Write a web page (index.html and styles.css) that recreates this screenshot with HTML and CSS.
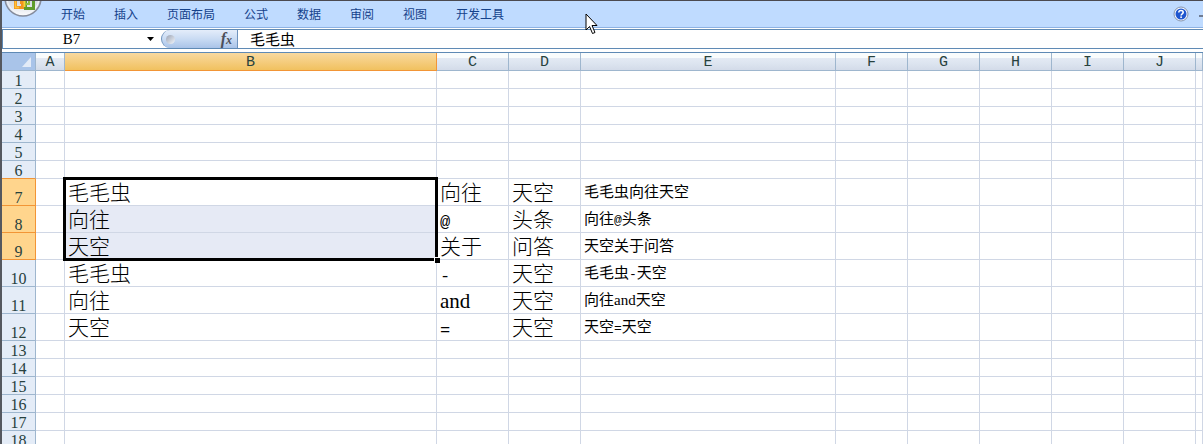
FILE: index.html
```html
<!DOCTYPE html>
<html lang="zh-CN">

<head>
    <meta charset="UTF-8">
    <meta name="viewport" content="width=device-width, initial-scale=1.0">
    <title>工作表</title>
    <link rel="stylesheet" href="styles.css">
</head>

<body>

    <header class="ribbon">
        <button class="office" aria-label="Office 按钮">
            <svg width="38" height="38" viewBox="0 0 38 38">
                <defs>
                    <linearGradient id="ball" x1="0" y1="0" x2="0" y2="1">
                        <stop offset="0.4" stop-color="#c9cfda" />
                        <stop offset="0.75" stop-color="#dfe4ec" />
                        <stop offset="1" stop-color="#ffffff" />
                    </linearGradient>
                </defs>
                <circle cx="19" cy="19" r="18" fill="url(#ball)" stroke="#858c9c" stroke-width="1.5" />
                <circle cx="19" cy="19" r="16" fill="none" stroke="#f4f6fa" />
                <path d="M16 20H11.500V28.500H18.500V23.500H16" fill="none" stroke="#f0941e" stroke-width="3" />
                <path d="M11.500 20V28.500H15" fill="none" stroke="#ffc23a" stroke-width="1.500" />
                <path d="M21.500 20V29.500H29.500V20" fill="none" stroke="#5f9c2c" stroke-width="3" />
                <path d="M25 20V25H22" fill="none" stroke="#8fbf3f" stroke-width="2" />
                <path d="M20.500 20V28" stroke="#f4d23a" stroke-width="2" />
            </svg>
        </button>
        <nav class="tabs">
            <a href="#">开始</a>
            <a href="#">插入</a>
            <a href="#">页面布局</a>
            <a href="#">公式</a>
            <a href="#">数据</a>
            <a href="#">审阅</a>
            <a href="#">视图</a>
            <a href="#">开发工具</a>
        </nav>
        <button class="help" aria-label="帮助">
            <svg width="16" height="16" viewBox="0 0 16 16">
                <circle cx="8" cy="8" r="7" fill="#f4f8ff" stroke="#8795ad" />
                <circle cx="8" cy="8" r="5.5" fill="#1f56cf" />
                <path d="M5.8 6.4C5.8 3.8 10.3 3.9 10.2 6.4C10.1 7.8 8.1 7.8 8.1 9.5" fill="none" stroke="#fff" stroke-width="1.6" />
                <rect x="7.3" y="10.4" width="1.6" height="1.6" fill="#fff" />
            </svg>
        </button>
        <button class="minimize" aria-label="最小化"></button>
    </header>

    <div class="formula-bar">
        <input class="name-box" type="text" value="B7" aria-label="名称框">
        <button class="name-arrow" aria-label="名称列表">
            <svg width="7" height="4" viewBox="0 0 7 4"><path d="M0 0H7L3.5 4Z" /></svg>
        </button>
        <button class="fx" aria-label="插入函数">
            <span class="knob"></span>
            <em>f<small>x</small></em>
        </button>
        <input class="formula" type="text" value="毛毛虫" aria-label="编辑栏">
    </div>

    <main class="sheet">
        <table>
            <colgroup>
                <col class="w-num">
                <col class="w-a">
                <col class="w-b">
                <col class="w-std">
                <col class="w-std">
                <col class="w-e">
                <col class="w-std">
                <col class="w-std">
                <col class="w-std">
                <col class="w-std">
                <col class="w-std">
                <col>
            </colgroup>
            <thead>
                <tr>
                    <th class="corner"><svg width="9" height="10" viewBox="0 0 9 10"><path d="M9 0V10H0Z" fill="#e3ebf7" /></svg></th>
                    <th>A</th>
                    <th class="active">B</th>
                    <th>C</th>
                    <th>D</th>
                    <th>E</th>
                    <th>F</th>
                    <th>G</th>
                    <th>H</th>
                    <th>I</th>
                    <th>J</th>
                    <th></th>
                </tr>
            </thead>
            <tbody>
                <tr><th>1</th><td></td><td></td><td></td><td></td><td></td><td></td><td></td><td></td><td></td><td></td><td></td></tr>
                <tr><th>2</th><td></td><td></td><td></td><td></td><td></td><td></td><td></td><td></td><td></td><td></td><td></td></tr>
                <tr><th>3</th><td></td><td></td><td></td><td></td><td></td><td></td><td></td><td></td><td></td><td></td><td></td></tr>
                <tr><th>4</th><td></td><td></td><td></td><td></td><td></td><td></td><td></td><td></td><td></td><td></td><td></td></tr>
                <tr><th>5</th><td></td><td></td><td></td><td></td><td></td><td></td><td></td><td></td><td></td><td></td><td></td></tr>
                <tr class="before"><th>6</th><td></td><td></td><td></td><td></td><td></td><td></td><td></td><td></td><td></td><td></td><td></td></tr>
                <tr class="tall picked">
                    <th>7</th><td></td>
                    <td class="anchor">毛毛虫<div class="selection"><i class="handle"></i></div></td>
                    <td>向往</td><td>天空</td><td class="joined">毛毛虫向往天空</td>
                    <td></td><td></td><td></td><td></td><td></td><td></td>
                </tr>
                <tr class="tall picked">
                    <th>8</th><td></td><td class="shade">向往</td>
                    <td><span class="half">@</span></td><td>头条</td><td class="joined">向往<span class="half">@</span>头条</td>
                    <td></td><td></td><td></td><td></td><td></td><td></td>
                </tr>
                <tr class="tall picked">
                    <th>9</th><td></td><td class="shade">天空</td>
                    <td>关于</td><td>问答</td><td class="joined">天空关于问答</td>
                    <td></td><td></td><td></td><td></td><td></td><td></td>
                </tr>
                <tr class="tall">
                    <th>10</th><td></td><td>毛毛虫</td>
                    <td><span class="half">-</span></td><td>天空</td><td class="joined">毛毛虫<span class="half">-</span>天空</td>
                    <td></td><td></td><td></td><td></td><td></td><td></td>
                </tr>
                <tr class="tall">
                    <th>11</th><td></td><td>向往</td>
                    <td>and</td><td>天空</td><td class="joined">向往and天空</td>
                    <td></td><td></td><td></td><td></td><td></td><td></td>
                </tr>
                <tr class="tall">
                    <th>12</th><td></td><td>天空</td>
                    <td><span class="half">=</span></td><td>天空</td><td class="joined">天空<span class="half">=</span>天空</td>
                    <td></td><td></td><td></td><td></td><td></td><td></td>
                </tr>
                <tr><th>13</th><td></td><td></td><td></td><td></td><td></td><td></td><td></td><td></td><td></td><td></td><td></td></tr>
                <tr><th>14</th><td></td><td></td><td></td><td></td><td></td><td></td><td></td><td></td><td></td><td></td><td></td></tr>
                <tr><th>15</th><td></td><td></td><td></td><td></td><td></td><td></td><td></td><td></td><td></td><td></td><td></td></tr>
                <tr><th>16</th><td></td><td></td><td></td><td></td><td></td><td></td><td></td><td></td><td></td><td></td><td></td></tr>
                <tr><th>17</th><td></td><td></td><td></td><td></td><td></td><td></td><td></td><td></td><td></td><td></td><td></td></tr>
                <tr><th>18</th><td></td><td></td><td></td><td></td><td></td><td></td><td></td><td></td><td></td><td></td><td></td></tr>
            </tbody>
        </table>
    </main>

    <svg class="pointer" width="13" height="22" viewBox="0 0 13 22">
        <path d="M1 1V17L4.600 13.500L7.500 20.500L10 19.500L7 12.500H12Z" fill="#fff" stroke="#000" />
    </svg>

</body>

</html>
```
FILE: styles.css
```css
* {
    box-sizing: border-box;
}

html,
body {
    height: 100%;
    margin: 0;
}

body {
    display: flex;
    flex-direction: column;
    position: relative;
    overflow: hidden;
    border-top: 1px solid #4b4a50;
    border-left: 2px solid #55585f;
    background: #fff;
    font-family: "Liberation Serif", "Noto Sans CJK SC", serif;
    color: #000;
}

button,
input {
    margin: 0;
    padding: 0;
    border: 0;
    background: none;
    font-family: inherit;
    color: inherit;
}

/* ribbon */
.ribbon {
    display: flex;
    flex: none;
    align-items: center;
    position: relative;
    height: 27px;
    padding-left: 59px;
    background: #bfdbff;
    border-bottom: 1px solid #8db2e3;
}

.office {
    position: absolute;
    left: 2px;
    bottom: 10px;
    height: 38px;
    line-height: 0;
}

.tabs {
    display: flex;
    flex: 1;
    gap: 29px;
}

.tabs a {
    font: 12px/18px "Noto Sans CJK SC", sans-serif;
    color: #15428b;
    text-decoration: none;
    white-space: nowrap;
}

.help {
    height: 16px;
    margin-right: 10px;
    line-height: 0;
}

.minimize {
    width: 4px;
    height: 2px;
    margin-top: 4px;
    background: #6f7c93;
}

/* formula bar */
.formula-bar {
    display: flex;
    flex: none;
    align-items: stretch;
    height: 20px;
    margin-top: 1px;
    border: solid #5f8ab5;
    border-width: 1px 0 1px 1px;
}

.name-box {
    width: 137px;
    font-size: 15px;
    text-align: center;
}

.name-arrow {
    width: 21px;
    line-height: 0;
}

.fx {
    display: flex;
    align-items: center;
    justify-content: space-between;
    width: 77px;
    padding: 0 5px 0 4px;
    border: solid #6e93bd;
    border-width: 0 1px;
    border-radius: 9px 0 0 9px;
    background: linear-gradient(#e4edfa, #c9dbf3 50%, #a9c3e8);
}

.knob {
    width: 9px;
    height: 9px;
    border-radius: 50%;
    background: linear-gradient(135deg, #9aa3b4, #f3f6fb);
}

.fx em {
    font-size: 16px;
    line-height: 16px;
    font-weight: bold;
    color: #4b4f5a;
}

.fx small {
    font-size: 12px;
}

.formula {
    flex: 1;
    min-width: 0;
    padding: 0 0 2px 12px;
    font-size: 15px;
}

/* sheet */
.sheet {
    flex: 1;
    min-height: 0;
    margin-top: 3px;
    overflow: hidden;
    border-top: 1px solid #5f8ab5;
}

table {
    width: 100%;
    table-layout: fixed;
    border-collapse: separate;
    border-spacing: 0;
}

.w-num {
    width: 34px;
}

.w-a {
    width: 29px;
}

.w-b {
    width: 372px;
}

.w-std {
    width: 72px;
}

.w-e {
    width: 255px;
}

th,
td {
    height: 18px;
    padding: 0;
    border: solid #d0d7e5;
    border-width: 0 1px 1px 0;
    white-space: nowrap;
}

th {
    border-color: #9eb6ce;
    font-size: 16px;
    line-height: 15px;
    font-weight: normal;
    vertical-align: bottom;
    color: #27413e;
}

thead th {
    padding-top: 3px;
    background: linear-gradient(#f9fcfd 30%, #e4eaf4 30%, #dde5f0 60%, #d3dbe9);
    font-family: "Liberation Mono", monospace;
    font-size: 15px;
    line-height: 14px;
}

thead .active {
    border-color: #f29536;
    background: linear-gradient(#f9d99f, #f1c15f);
}

thead .corner {
    padding: 0 4px 3px 0;
    background: #a9c4e9;
    line-height: 0;
    text-align: right;
}

tbody th {
    background: #e4ecf7;
}

.tall th,
.tall td {
    height: 27px;
}

.tall td {
    padding: 2px 0 0 3px;
    font-size: 21px;
    line-height: 24px;
    font-weight: 300;
}

.tall .joined {
    padding-top: 0;
    font-size: 15px;
    font-weight: 400;
}

/* symbols as wide as half a Chinese character */
.half {
    font-family: "Liberation Mono", monospace;
    font-size: 17px;
    line-height: 1px;
}

.joined .half {
    font-size: 13px;
}

.picked th {
    border-color: #f29536;
    background: #ffd58d;
}

.before th {
    border-bottom-color: #f29536;
}

.shade {
    background: #e6eaf5;
}

.anchor {
    position: relative;
}

.selection {
    position: absolute;
    top: -2px;
    left: -2px;
    right: -2px;
    height: 84px;
    border: 3px solid #000;
}

.handle {
    position: absolute;
    right: -5px;
    bottom: -5px;
    width: 6px;
    height: 6px;
    border: solid #fff;
    border-width: 1px 0 0 1px;
    background: #000;
}

.pointer {
    position: absolute;
    top: 12px;
    left: 583px;
}
```
